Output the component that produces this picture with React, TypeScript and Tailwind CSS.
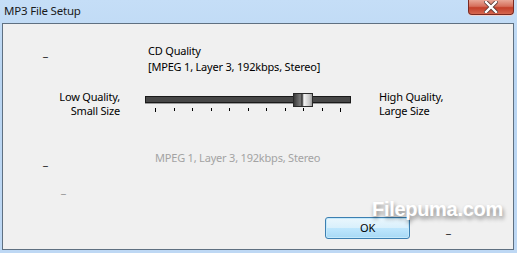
const ticks = [0, 1, 2, 3, 4, 5, 6, 7, 8, 9, 10]

function Slider() {
  return (
    <div className="relative w-[206px] h-[20px]">
      <div className="absolute left-0 right-0 top-[5px] h-[7px] bg-[#474747] border border-[#1a1a1a] shadow-[0_1px_0_#9a9a9a]" />
      <div className="absolute left-[148px] top-[2px] w-[20px] h-[14px] border border-[#2a2a2a] bg-[linear-gradient(90deg,#3a3a3a_0%,#7a7a7a_35%,#2e2e2e_45%,#f4f4f4_55%,#c8c8c8_85%,#9a9a9a_100%)]" />
      {ticks.map((t) => (
        <div
          key={t}
          className={
            t === 0 || t === 10
              ? "absolute top-[17px] w-px h-[4px] bg-black"
              : "absolute top-[17px] w-px h-[3px] bg-black"
          }
          style={{ left: 10 + Math.round(t * 18.5) }}
        />
      ))}
    </div>
  )
}

export default function App() {
  return (
    <div
      className="relative w-[517px] h-[253px] overflow-hidden bg-[linear-gradient(180deg,#c5def7_0%,#b9d5f2_30%,#bed8f4_100%)] text-[11px] tracking-[-0.2px] text-black"
      style={{ fontFamily: '"Noto Sans", "Open Sans", sans-serif' }}
    >
      <div className="flex justify-between h-[23px]">
        <div className="pl-[4px] pt-[3px] text-[11.5px] text-[#1a1a1a] leading-[16px]">MP3 File Setup</div>
        <div className="mr-[3px] w-[46px] h-[15px] rounded-b-[4px] border border-t-0 border-[#7a2a22] bg-[linear-gradient(180deg,#e9a797_0%,#d66f5c_45%,#c33f2a_55%,#d5674f_100%)] flex items-center justify-center shadow-[0_1px_0_#f3d2cb]">
          <svg width="14" height="12" viewBox="0 0 14 12">
            <path d="M2 1 L12 11 M12 1 L2 11" stroke="#5a3a36" strokeWidth="4" strokeLinecap="square" />
            <path d="M2 1 L12 11 M12 1 L2 11" stroke="#ffffff" strokeWidth="2.4" strokeLinecap="square" />
          </svg>
        </div>
      </div>

      <div className="ml-[2px] w-[512px] h-[227px] border border-[#5f7081] bg-[#f0f0f0] flex flex-col">
        <div className="flex pt-[19px] h-[50px]">
          <div className="w-[145px] pl-[40px] pt-[1px] leading-[16px]">_</div>
          <div className="leading-[16px]">
            <div>CD Quality</div>
            <div>[MPEG 1, Layer 3, 192kbps, Stereo]</div>
          </div>
        </div>

        <div className="flex mt-[16px] h-[41px]">
          <div className="w-[117px] text-right leading-[14px]">
            <div>Low Quality,</div>
            <div>Small Size</div>
          </div>
          <div className="ml-[25px] pt-[1px]">
            <Slider />
          </div>
          <div className="ml-[28px] leading-[14px]">
            <div>High Quality,</div>
            <div>Large Size</div>
          </div>
        </div>

        <div className="flex mt-[19px] h-[20px] leading-[16px]">
          <div className="w-[152px] pl-[40px] pt-[3px]">_</div>
          <div className="text-[#a3a3a3]">MPEG 1, Layer 3, 192kbps, Stereo</div>
        </div>

        <div className="pl-[58px] mt-[11px] h-[24px] leading-[16px] text-[#8a8a8a]">_</div>

        <div className="flex items-start mt-[12px]">
          <div className="ml-[322px] w-[85px] h-[22px] rounded-[3px] border border-[#3c7fb1] bg-[linear-gradient(180deg,#eaf6fd_0%,#d9f0fc_48%,#bee6fd_52%,#a7d9f5_100%)] shadow-[inset_0_0_0_1px_#c4e9fb] flex items-center justify-center leading-[14px]">
            OK
          </div>
          <div className="ml-[36px] pt-[4px] leading-[16px]">_</div>
        </div>
      </div>

      <div
        className="absolute left-[372px] top-[197px] text-[20px] leading-[24px] font-bold text-white tracking-[-0.3px] [text-shadow:1px_3px_4px_rgba(0,0,0,0.45)] pointer-events-none"
        style={{ fontFamily: '"Liberation Sans", Arial, sans-serif' }}
      >
        Filepuma.com
      </div>
    </div>
  )
}
